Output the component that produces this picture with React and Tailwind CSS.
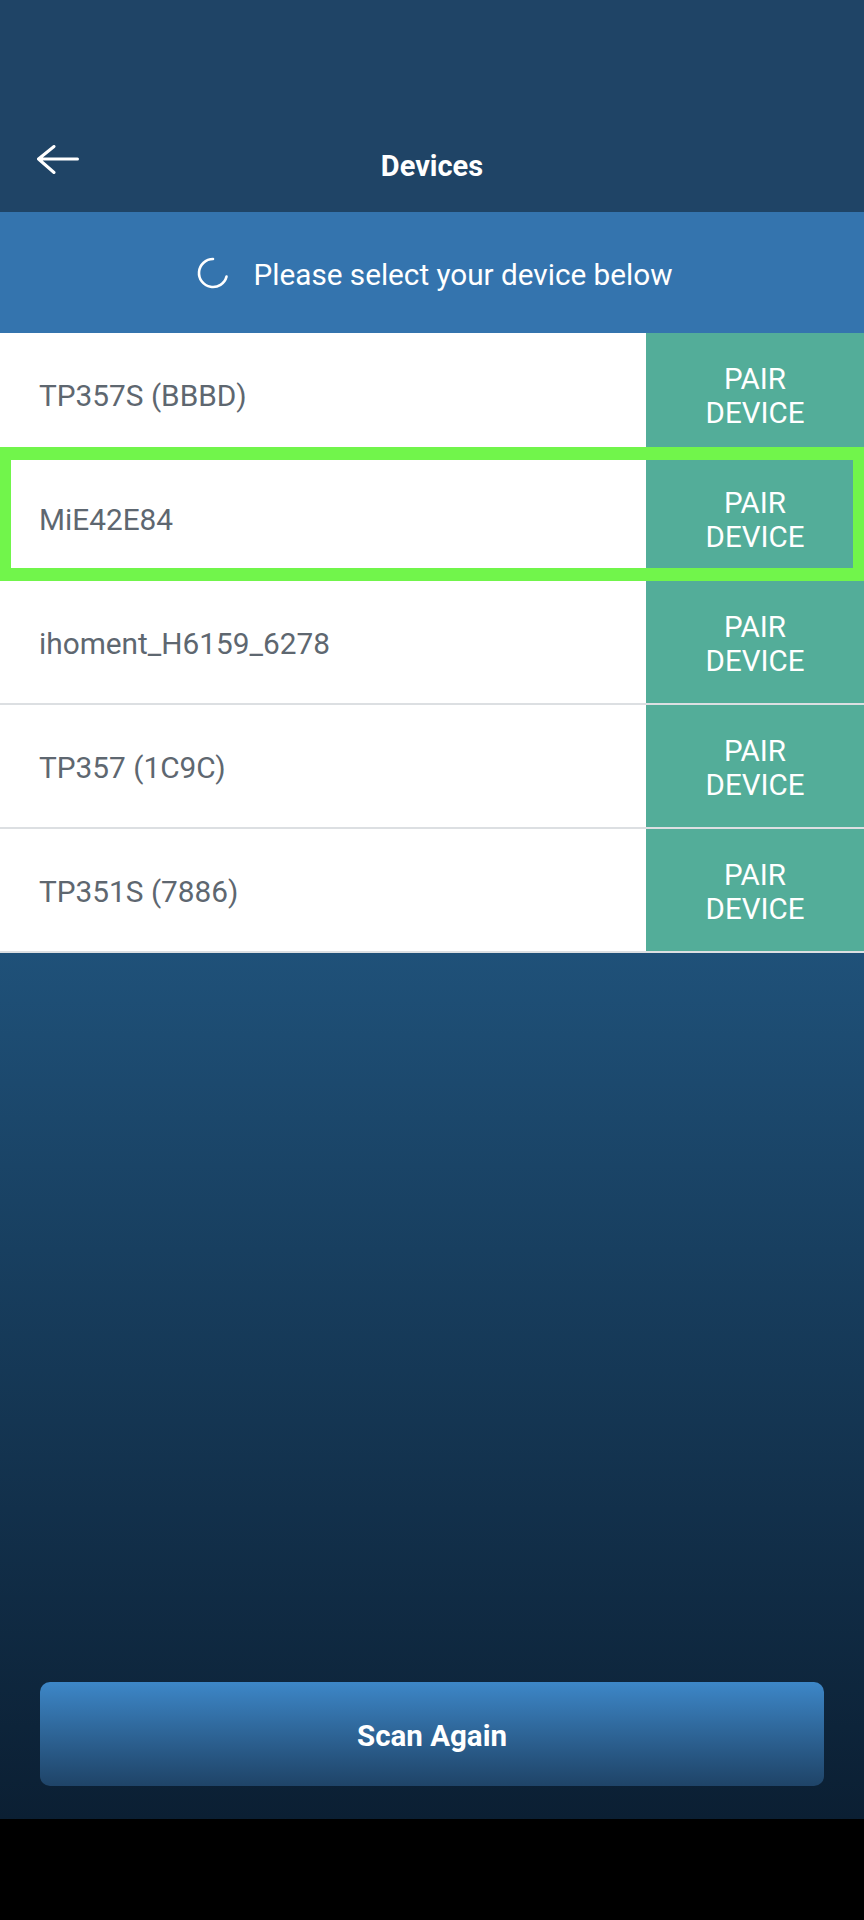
import React from "react";

const devices = [
  "TP357S (BBBD)",
  "MiE42E84",
  "ihoment_H6159_6278",
  "TP357 (1C9C)",
  "TP351S (7886)",
];

function BackArrow() {
  return (
    <svg width="42" height="29" viewBox="0 0 42 29" fill="none">
      <path
        d="M1.5 14 H40.5 M17 1.5 L1.5 14 L17 27.5"
        stroke="white"
        strokeWidth="3"
        strokeLinecap="round"
        strokeLinejoin="round"
      />
    </svg>
  );
}

function Spinner() {
  return (
    <svg width="34" height="34" viewBox="0 0 34 34" fill="none">
      <path
        d="M17 3 A14 14 0 1 0 30.52 20.62"
        stroke="white"
        strokeWidth="2.6"
        strokeLinecap="round"
      />
    </svg>
  );
}

export default function App() {
  return (
    <div
      className="w-[864px] h-[1920px] flex flex-col bg-black"
      style={{ fontFamily: "Roboto, 'Noto Sans', sans-serif" }}
    >
      {/* Header */}
      <div className="h-[212px] shrink-0 bg-[#1f4466] pt-[145px] pl-[37px] pr-[37px] grid grid-cols-[1fr_auto_1fr] items-start">
        <div>
          <BackArrow />
        </div>
        <div className="text-white font-bold text-[29px] leading-[42px] text-center">
          Devices
        </div>
        <div />
      </div>

      {/* Banner */}
      <div className="h-[121px] shrink-0 bg-[#3474ae] flex items-center justify-center gap-[24px] pt-[4px] pl-[4px]">
        <div className="-mt-[4px]">
          <Spinner />
        </div>
        <span className="text-white text-[29.7px] leading-[36px]">
          Please select your device below
        </span>
      </div>

      {/* List */}
      <div className="relative shrink-0">
        {devices.map((name) => (
          <div
            key={name}
            className="h-[124px] flex border-b-2 border-[#dcdfe2]"
          >
            <div className="flex-1 bg-white flex items-center pl-[39px] pt-[4px] text-[29.8px] leading-[36px] text-[#5e6770]">
              {name}
            </div>
            <div className="w-[218px] bg-[#53ad99] flex flex-col items-center justify-center pt-[4px] text-white text-[29.5px] leading-[34px] text-center">
              <span>PAIR</span>
              <span>DEVICE</span>
            </div>
          </div>
        ))}
        <div className="absolute left-0 right-0 top-[114px] h-[134px] border-x-[11px] border-y-[13px] border-[#71f54b] pointer-events-none" />
      </div>

      {/* Gradient area */}
      <div className="flex-1 bg-gradient-to-b from-[#1f5179] to-[#0b1f33] flex flex-col justify-end px-[40px] pb-[33px]">
        <button className="h-[104px] w-full rounded-[10px] bg-gradient-to-b from-[#3d87c8] to-[#1f4468] text-white font-bold text-[29.5px] pt-[4px]">
          Scan Again
        </button>
      </div>

      {/* Bottom black bar */}
      <div className="h-[101px] shrink-0 bg-black" />
    </div>
  );
}
